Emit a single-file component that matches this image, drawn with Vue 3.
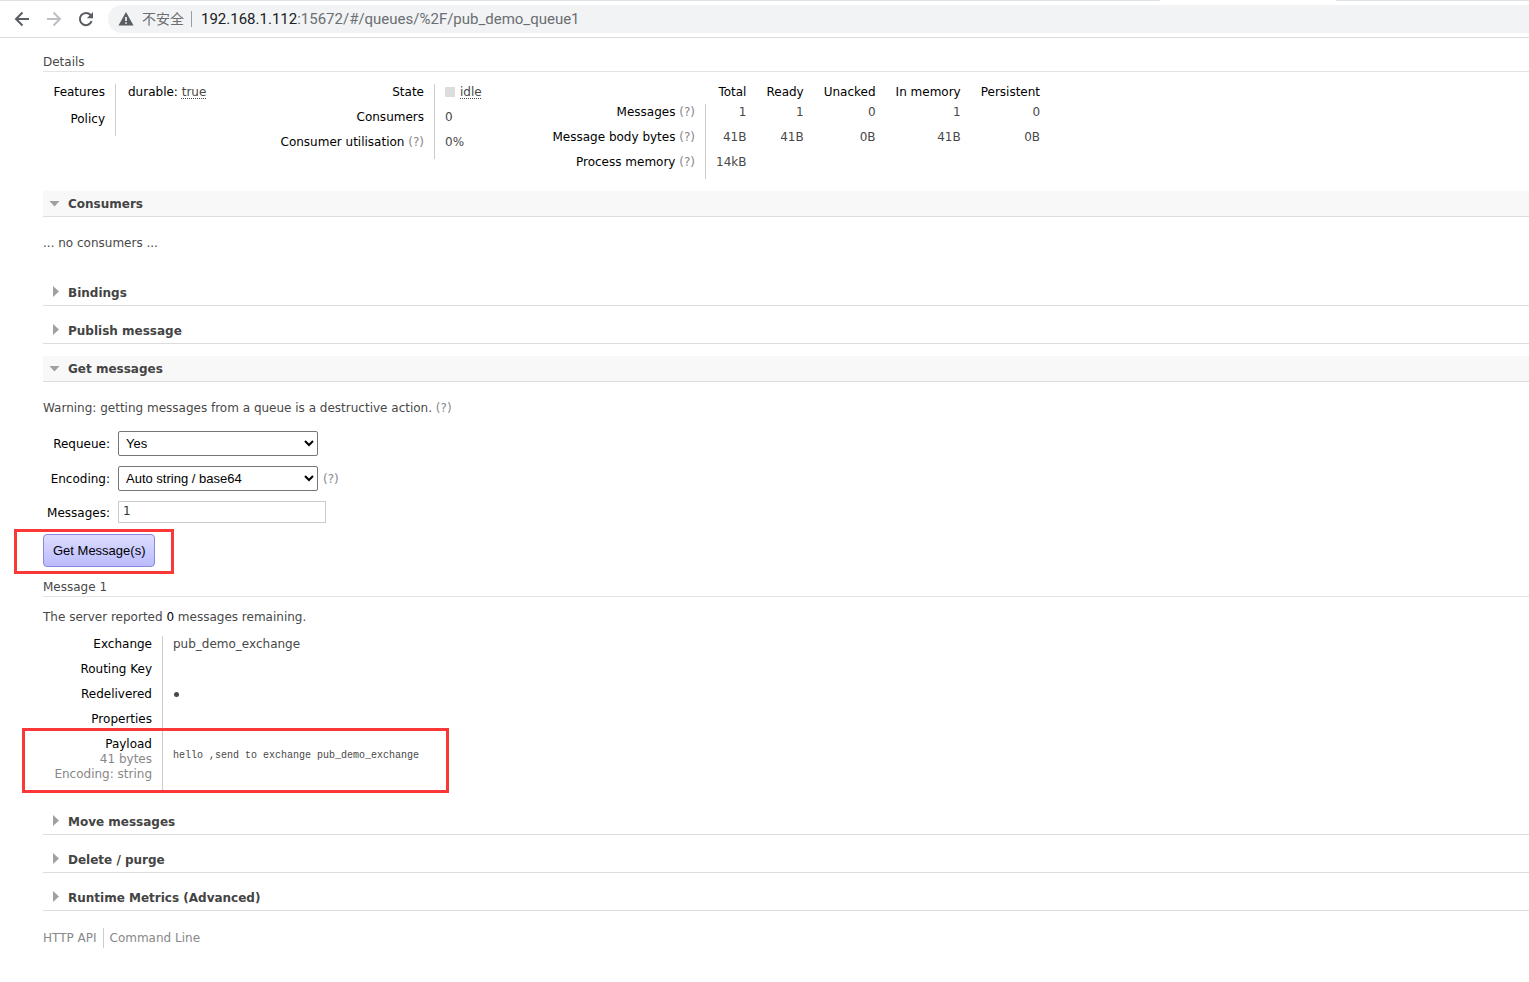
<script setup>
import { ref } from 'vue'

const requeue = ref('Yes')
const encoding = ref('Auto string / base64')
const count = ref('1')

const columns = ['Total', 'Ready', 'Unacked', 'In memory', 'Persistent']
const stats = [
  { name: 'Messages', values: ['1', '1', '0', '1', '0'] },
  { name: 'Message body bytes', values: ['41B', '41B', '0B', '41B', '0B'] },
  { name: 'Process memory', values: ['14kB', '', '', '', ''] },
]
</script>

<template>
  <header class="browser">
    <div class="tabstrip"><span class="tab-active"></span></div>
    <div class="toolbar">
      <button class="nav" aria-label="Back">
        <svg width="16" height="16" viewBox="0 0 16 16"><path d="M15 8H2.500M8.500 1.500L2 8l6.500 6.500" /></svg>
      </button>
      <button class="nav off" aria-label="Forward">
        <svg width="16" height="16" viewBox="0 0 16 16"><path d="M1 8h12.500M7.500 1.500L14 8l-6.500 6.500" /></svg>
      </button>
      <button class="nav" aria-label="Reload">
        <svg width="16" height="16" viewBox="0 0 16 16">
          <path d="M13.700 10.200A6.100 6.100 0 1 1 12.600 4" />
          <path class="solid" d="M15 1v6.200H8.800z" />
        </svg>
      </button>
      <div class="address">
        <svg class="warn" width="16" height="14" viewBox="0 0 16 14">
          <path d="M8 0l7.500 13.500H.500z" />
          <path class="mark" d="M7.200 5h1.600v4H7.200zM7.200 10.200h1.600v1.600H7.200z" />
        </svg>
        <span class="insecure">不安全</span>
        <span class="bar"></span>
        <span class="url"><span class="host">192.168.1.112</span>:15672/#/queues/%2F/pub_demo_queue1</span>
      </div>
    </div>
  </header>

  <main class="page">
    <h3>Details</h3>
    <div class="facts-row">
      <table class="facts features">
        <tbody>
          <tr><th>Features</th><td class="param">durable: <abbr>true</abbr></td></tr>
          <tr><th>Policy</th><td></td></tr>
        </tbody>
      </table>
      <table class="facts state">
        <tbody>
          <tr><th>State</th><td><span class="square"></span><abbr>idle</abbr></td></tr>
          <tr><th>Consumers</th><td>0</td></tr>
          <tr><th>Consumer utilisation <a class="help" href="#">(?)</a></th><td>0%</td></tr>
        </tbody>
      </table>
      <table class="facts stats">
        <thead>
          <tr><td></td><th v-for="c in columns" :key="c">{{ c }}</th></tr>
        </thead>
        <tbody>
          <tr v-for="s in stats" :key="s.name">
            <th>{{ s.name }} <a class="help" href="#">(?)</a></th>
            <td v-for="(v, i) in s.values" :key="i">{{ v }}</td>
          </tr>
        </tbody>
      </table>
    </div>

    <h2 class="open"><button><i class="down"></i><span>Consumers</span></button></h2>
    <p class="empty">... no consumers ...</p>
    <h2><button><i class="right"></i><span>Bindings</span></button></h2>
    <h2><button><i class="right"></i><span>Publish message</span></button></h2>
    <h2 class="open"><button><i class="down"></i><span>Get messages</span></button></h2>

    <section class="get">
      <p>Warning: getting messages from a queue is a destructive action. <a class="help" href="#">(?)</a></p>
      <form class="form" @submit.prevent>
        <label for="requeue">Requeue:</label>
        <div class="field">
          <select id="requeue" v-model="requeue"><option>Yes</option><option>No</option></select>
        </div>
        <label for="encoding">Encoding:</label>
        <div class="field">
          <select id="encoding" v-model="encoding"><option>Auto string / base64</option><option>base64</option></select>
          <a class="help" href="#">(?)</a>
        </div>
        <label for="count">Messages:</label>
        <div class="field"><input id="count" v-model="count" type="text" /></div>
        <div class="action">
          <button type="submit" class="submit">Get Message(s)</button>
          <span class="frame around-button"></span>
        </div>
      </form>

      <h3>Message 1</h3>
      <p class="remaining">The server reported <b>0</b> messages remaining.</p>
      <div class="message">
        <table class="facts">
          <tbody>
            <tr><th>Exchange</th><td>pub_demo_exchange</td></tr>
            <tr><th>Routing Key</th><td></td></tr>
            <tr><th>Redelivered</th><td><span class="dot"></span></td></tr>
            <tr><th>Properties</th><td></td></tr>
            <tr class="payload">
              <th>Payload<small>41 bytes</small><small>Encoding: string</small></th>
              <td><pre>hello ,send to exchange pub_demo_exchange</pre></td>
            </tr>
          </tbody>
        </table>
        <span class="frame around-payload"></span>
      </div>
    </section>

    <h2><button><i class="right"></i><span>Move messages</span></button></h2>
    <h2><button><i class="right"></i><span>Delete / purge</span></button></h2>
    <h2><button><i class="right"></i><span>Runtime Metrics (Advanced)</span></button></h2>

    <footer class="links"><a href="#">HTTP API</a><a href="#">Command Line</a></footer>
  </main>
</template>

<style>
body { background: #fff; overflow-x: hidden; }
</style>

<style scoped>
* { box-sizing: border-box; }
.browser { border-bottom: 1px solid #dadce0; }
.tabstrip { height: 1px; background: #dee1e6; display: flex; justify-content: flex-end; }
.tab-active { width: 176px; margin-right: 193px; background: #fff; }
.toolbar { height: 36px; display: flex; align-items: center; padding-left: 6px; }
.nav { width: 32px; height: 28px; padding: 0; border: 0; background: none; display: flex; align-items: center; justify-content: center; }
.nav svg { fill: none; stroke: #5a5e63; stroke-width: 2; }
.nav.off svg { stroke: #bcbec1; }
.nav .solid { fill: #5a5e63; stroke: none; }
.address { flex: 1; height: 28px; margin-left: 6px; padding-left: 10px; border-radius: 14px 0 0 14px; background: #f1f3f4; display: flex; align-items: center; color: #6b6e72; white-space: nowrap; }
.warn { fill: #5a5e63; }
.mark { fill: #fff; }
.insecure { margin-left: 8px; padding-bottom: 2px; font: 14px/20px "Noto Sans CJK SC", sans-serif; }
.bar { width: 1px; height: 16px; margin: 0 9px 0 7px; background: #9a9da1; }
.url { font: 15px/20px Roboto, "Noto Sans", sans-serif; }
.host { color: #202124; }

.page { padding: 16px 0 0 43px; font: 12px/17px Verdana, "DejaVu Sans", sans-serif; color: #484848; }
h3 { margin: 0 0 12px; border-bottom: 1px solid #e4e4e4; font-size: 12px; font-weight: normal; }
p { margin: 0; }
abbr { color: #484848; text-decoration: underline dotted 1px; text-underline-offset: 2px; }
.help { color: #888; text-decoration: none; }

.facts-row { display: flex; align-items: flex-start; margin-bottom: 12px; }
.facts { border-collapse: separate; border-spacing: 0; white-space: nowrap; }
.facts th, .facts td { padding: 0 10px 8px; height: 25px; vertical-align: top; }
.facts th { font-weight: normal; text-align: right; color: #000; }
.facts tbody th { border-right: 1px solid #ccc; }
.features { width: 226px; }
.features th { width: 73px; }
.features .param { height: 27px; padding-left: 12px; color: #000; }
.state { width: 273px; }
.state th { width: 166px; }
.square { display: inline-block; width: 10px; height: 10px; margin-right: 5px; background: #ddd; vertical-align: -1px; }
.stats thead th, .stats thead td { height: 20px; padding-bottom: 3px; }
.stats td { text-align: right; }
.stats tbody th { width: 164px; }

h2 { margin: 0 0 12px; border-bottom: 1px solid #ddd; font-size: 12px; }
h2.open { background: #f8f8f8; margin-bottom: 18px; }
h2 button { display: flex; align-items: center; width: 100%; height: 25px; padding: 0; border: 0; background: none; color: #444; font: bold 12px/15px Verdana, "DejaVu Sans", sans-serif; }
h2 span { padding-top: 2px; }
h2 i { flex: none; background: #a0a0a0; }
.down { width: 11px; height: 6px; margin: 0 8px 0 6px; clip-path: polygon(0 0, 100% 0, 50% 100%); }
.right { width: 6px; height: 11px; margin: 0 9px 2px 10px; clip-path: polygon(0 0, 100% 50%, 0 100%); }
.empty { margin-bottom: 28px; }

.get { margin-bottom: 18px; }
.form { display: grid; grid-template-columns: 67px 1fr; gap: 10px 8px; margin: 14px 0 12px; align-items: center; }
.form label { padding-top: 2px; text-align: right; color: #000; }
.field { display: flex; align-items: center; gap: 5px; }
.field .help { padding-top: 1px; }
select { width: 200px; height: 25px; padding: 0 3px; border: 1px solid #767676; border-radius: 2px; background-color: #fff; color: #000; font: 13px "Liberation Sans", Arial, sans-serif; }
.field input { width: 208px; height: 22px; padding: 0 4px 2px; border: 1px solid #ccc; color: #333; font: 12px Verdana, "DejaVu Sans", sans-serif; }
.action { grid-column: 1 / -1; justify-self: start; position: relative; margin-top: 1px; }
.submit { display: block; height: 33px; padding: 0 9px; border: 1px solid #88d; border-radius: 4px; background: linear-gradient(#ddf, #bbf); color: #000; font: 13px "Liberation Sans", Arial, sans-serif; }
.frame { position: absolute; border: 3px solid #fb3838; pointer-events: none; }
.around-button { inset: -5px -19px -7px -29px; }
.remaining { margin-bottom: 10px; }
.remaining b { font-weight: normal; color: #000; }
.message { position: relative; }
.message th { width: 120px; }
.message .payload th { padding: 1px 10px 9px; line-height: 15px; }
.message small { display: block; font-size: 12px; color: #888; }
.message pre { margin: 12px 0 0; font: 10px/15px "Liberation Mono", monospace; }
.dot { display: inline-block; width: 5px; height: 5px; margin-left: 1px; border-radius: 50%; background: #484848; vertical-align: 1px; }
.around-payload { left: -21px; bottom: -2px; width: 427px; height: 65px; }

.links { display: flex; margin-top: 17px; line-height: 19px; }
.links a { padding-top: 1px; color: #888; text-decoration: none; }
.links a + a { margin-left: 6px; padding-left: 6px; border-left: 1px solid #ccc; }
</style>
